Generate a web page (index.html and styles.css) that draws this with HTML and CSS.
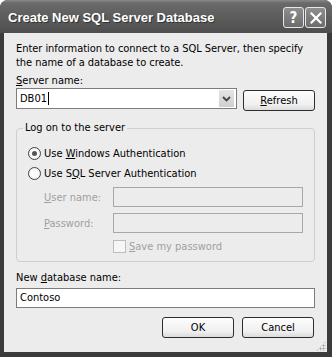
FILE: index.html
```html
<!DOCTYPE html>
<html lang="en">
<head>
    <meta charset="UTF-8">
    <title>Create New SQL Server Database</title>
    <link rel="stylesheet" href="styles.css">
</head>
<body>
    <div class="window">
        <!-- Title bar -->
        <div class="titlebar">
            <span class="title">Create New SQL Server Database</span>
            <div class="caption-buttons">
                <span class="cap-btn">?</span>
                <span class="cap-btn">
                    <svg width="12" height="12" viewBox="0 0 12 12">
                        <path d="M1.5 1.5 L10.5 10.5 M10.5 1.5 L1.5 10.5" stroke="#fff" stroke-width="2.2" stroke-linecap="square"/>
                    </svg>
                </span>
            </div>
        </div>

        <!-- Client area -->
        <div class="client">
            <p class="intro">Enter information to connect to a SQL Server, then specify the name of a database to create.</p>

            <div class="label server-label"><u>S</u>erver name:</div>
            <div class="server-row">
                <div class="combo">
                    <span class="combo-text">DB01<span class="caret"></span></span>
                    <span class="combo-drop">
                        <svg width="9" height="6" viewBox="0 0 9 6">
                            <path d="M1 1 L4.5 4.5 L8 1" fill="none" stroke="#444" stroke-width="1.8"/>
                        </svg>
                    </span>
                </div>
                <button class="btn"><u>R</u>efresh</button>
            </div>

            <fieldset class="logon">
                <legend>Log on to the server</legend>
                <div class="radio-row">
                    <span class="radio checked"></span>
                    <span>Use <u>W</u>indows Authentication</span>
                </div>
                <div class="radio-row">
                    <span class="radio"></span>
                    <span>Use S<u>Q</u>L Server Authentication</span>
                </div>
                <div class="field-row first">
                    <span class="field-label"><u>U</u>ser name:</span>
                    <span class="textbox disabled"></span>
                </div>
                <div class="field-row">
                    <span class="field-label"><u>P</u>assword:</span>
                    <span class="textbox disabled"></span>
                </div>
                <div class="check-row">
                    <span class="checkbox"></span>
                    <span class="dim"><u>S</u>ave my password</span>
                </div>
            </fieldset>

            <div class="label db-label">New <u>d</u>atabase name:</div>
            <div class="textbox wide">Contoso</div>

            <div class="button-row">
                <button class="btn">OK</button>
                <button class="btn">Cancel</button>
            </div>

            <div class="grip"></div>
        </div>
    </div>
</body>
</html>
```

FILE: styles.css
```css
/* Global styles */
body {
    margin: 0;
    background-color: #fff;
    font-family: "DejaVu Sans Condensed", "DejaVu Sans", sans-serif;
    font-size: 11px;
    color: #000;
}

/* Window frame */
.window {
    width: 332px;
    height: 357px;
    box-sizing: border-box;
    background-color: #3b3b3b;
    border-radius: 8px 8px 0 0;
    padding: 0 5px 5px 4px;
    display: flex;
    flex-direction: column;
}

.titlebar {
    height: 33px;
    margin: 0 -5px 0 -4px;
    padding: 0 6px 0 8px;
    border-radius: 8px 8px 0 0;
    background: linear-gradient(#8a8a8a 0, #6a6a6a 3px, #5a5a5a 60%, #4e4e4e 100%);
    display: flex;
    align-items: center;
    justify-content: space-between;
}

.title {
    color: #fff;
    font-family: "Liberation Sans", Arial, sans-serif;
    font-weight: bold;
    font-size: 13px;
    text-shadow: 1px 1px 0 #333;
    margin-top: 1px;
}

.caption-buttons {
    display: flex;
    gap: 1px;
    margin-top: 2px;
}

.cap-btn {
    width: 19px;
    height: 19px;
    border: 1px solid #e8e8e8;
    border-radius: 3px;
    background: linear-gradient(#8e8e8e, #6c6c6c);
    color: #fff;
    font-weight: bold;
    font-size: 15px;
    display: flex;
    align-items: center;
    justify-content: center;
}

/* Client area */
.client {
    flex: 1;
    position: relative;
    background-color: #ececec;
    padding: 9px 12px 0 12px;
}

.intro {
    margin: 0;
    line-height: 14px;
    width: 290px;
    letter-spacing: -0.05px;
}

.label {
    line-height: 14px;
}

.server-label {
    margin-top: 4px;
}

.server-row {
    display: flex;
    align-items: flex-start;
    margin-top: 0;
    gap: 6px;
}

.combo {
    width: 221px;
    height: 21px;
    box-sizing: border-box;
    border: 1px solid #7c7c7c;
    background-color: #fff;
    display: flex;
    align-items: center;
    justify-content: space-between;
    padding: 0 2px 0 3px;
}

.combo-text {
    display: flex;
    align-items: center;
}

.caret {
    width: 1px;
    height: 13px;
    background-color: #000;
    margin-left: 1px;
}

.combo-drop {
    width: 15px;
    height: 17px;
    background: linear-gradient(#e4e4e4, #cfcfcf);
    display: flex;
    align-items: center;
    justify-content: center;
}

/* Buttons */
.btn {
    width: 72px;
    height: 21px;
    border: 1px solid #2e2e2e;
    border-radius: 3px;
    background: linear-gradient(#fdfdfd, #f0f0f0 70%, #dcdcdc);
    font-family: inherit;
    font-size: 11px;
    color: #000;
    padding: 0;
}

.server-row .btn {
    margin-top: 2px;
}

/* Group box */
.logon {
    margin: 10px 0 0 0;
    padding: 8px 10px 10px 6px;
    border: 1px solid #cfcfcf;
    border-radius: 4px;
    height: 141px;
    box-sizing: border-box;
}

.logon legend {
    padding: 0 2px;
    line-height: 14px;
}

.radio-row {
    display: flex;
    align-items: center;
    gap: 3px;
    height: 20px;
    margin-left: 5px;
}

.radio {
    width: 11px;
    height: 11px;
    border: 1px solid #444;
    border-radius: 50%;
    background: radial-gradient(#fff 40%, #e2e2e2);
    display: flex;
    align-items: center;
    justify-content: center;
}

.radio.checked::after {
    content: "";
    width: 5px;
    height: 5px;
    border-radius: 50%;
    background-color: #555;
}

.field-row {
    display: flex;
    align-items: center;
    margin-top: 6px;
}

.field-row.first {
    margin-top: 4px;
}

.field-label {
    width: 69px;
    padding-left: 21px;
    color: #a0a0a0;
}

.textbox {
    height: 20px;
    box-sizing: border-box;
    border: 1px solid #7c7c7c;
    background-color: #fff;
    line-height: 18px;
    padding-left: 3px;
}

.textbox.disabled {
    width: 190px;
    border-color: #a8a8a8;
    background-color: #ececec;
}

.check-row {
    display: flex;
    align-items: center;
    gap: 3px;
    margin: 7px 0 0 90px;
}

.checkbox {
    width: 11px;
    height: 11px;
    border: 1px solid #bdbdbd;
    background-color: #f6f6f6;
}

.dim {
    color: #a0a0a0;
}

.db-label {
    margin-top: 9px;
}

.textbox.wide {
    width: 299px;
    margin-top: 3px;
}

.button-row {
    display: flex;
    justify-content: flex-end;
    gap: 8px;
    margin-top: 9px;
    padding-right: 1px;
}

/* Resize grip */
.grip {
    position: absolute;
    right: 1px;
    bottom: 1px;
    width: 10px;
    height: 10px;
    background-image: radial-gradient(#9a9a9a 0.9px, transparent 1.1px);
    background-size: 3px 3px;
    clip-path: polygon(100% 0, 100% 100%, 0 100%);
}
```
